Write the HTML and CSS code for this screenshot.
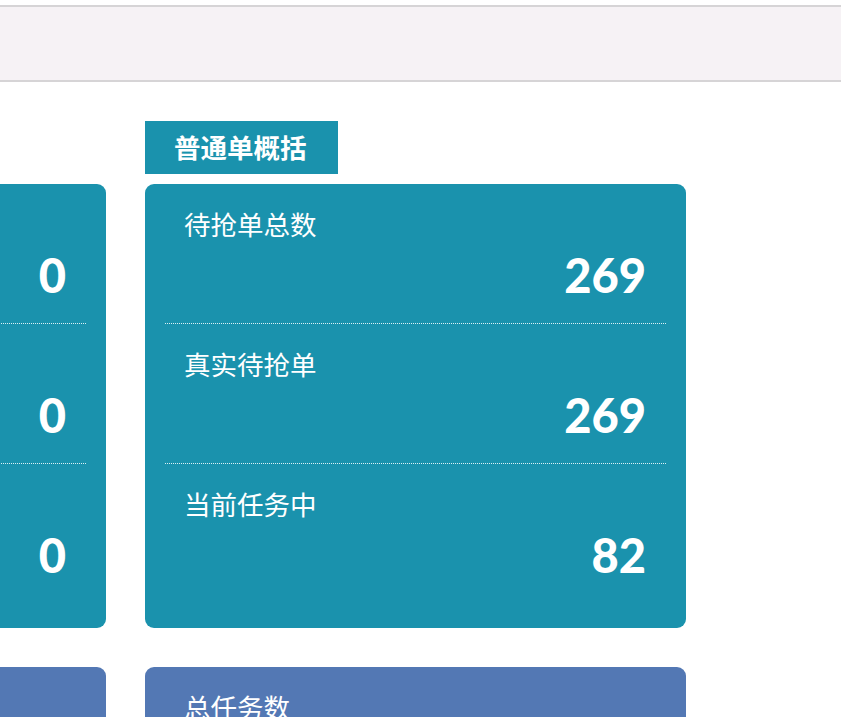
FILE: index.html
```html
<!DOCTYPE html>
<html lang="zh-CN">
<head>
<meta charset="utf-8">
<title>概括</title>
<link rel="stylesheet" href="styles.css">
</head>
<body>
<header class="topbar"></header>
<main class="board">
  <div class="row">
    <section class="col">
      <div class="tab">特殊单概括</div>
      <div class="card teal">
        <div class="item"><div class="label">待抢单总数</div><div class="num">0</div></div>
        <div class="item"><div class="label">真实待抢单</div><div class="num">0</div></div>
        <div class="item"><div class="label">当前任务中</div><div class="num">0</div></div>
      </div>
    </section>
    <section class="col">
      <div class="tab">普通单概括</div>
      <div class="card teal">
        <div class="item"><div class="label">待抢单总数</div><div class="num">269</div></div>
        <div class="item"><div class="label">真实待抢单</div><div class="num">269</div></div>
        <div class="item"><div class="label">当前任务中</div><div class="num">82</div></div>
      </div>
    </section>
  </div>
  <div class="row row2">
    <section class="col">
      <div class="card blue">
        <div class="item"><div class="label">总任务数</div><div class="num">0</div></div>
      </div>
    </section>
    <section class="col">
      <div class="card blue">
        <div class="item"><div class="label">总任务数</div><div class="num">0</div></div>
      </div>
    </section>
  </div>
</main>
</body>
</html>
```
FILE: styles.css
```css
html, body {
  margin: 0;
  padding: 0;
  background: #ffffff;
  overflow: hidden;
}
body {
  font-family: "Noto Sans CJK SC", "Noto Sans", sans-serif;
  color: #ffffff;
}
.topbar {
  margin-top: 5px;
  height: 73px;
  background: #f6f2f5;
  border-top: 2px solid #d6d4d6;
  border-bottom: 2px solid #d6d4d6;
}
.board {
  margin-left: -435px;
  padding-top: 39px;
}
.row {
  display: flex;
  gap: 39px;
  align-items: flex-start;
}
.row2 {
  margin-top: 39px;
}
.col {
  width: 541px;
  flex: none;
}
.tab {
  box-sizing: border-box;
  display: inline-block;
  background: #1a92ad;
  width: 193px;
  height: 53px;
  line-height: 52px;
  padding: 0 0 0 29px;
  font-size: 26.5px;
  font-weight: 700;
  margin-bottom: 10px;
  white-space: nowrap;
}
.card {
  border-radius: 9px;
  padding: 0 20px 24px;
}
.teal { background: #1a92ad; }
.blue { background: #5378b4; }
.item {
  box-sizing: border-box;
  height: 140px;
  padding: 25px 20px 0;
  border-bottom: 1px dotted rgba(255, 255, 255, 0.85);
}
.item:last-child {
  border-bottom: none;
}
.label {
  font-size: 26.5px;
  line-height: 30px;
  margin-left: -1px;
  white-space: nowrap;
}
.num {
  margin-top: 10px;
  text-align: right;
  font-family: "Lato", sans-serif;
  font-weight: 900;
  font-size: 47px;
  line-height: 52px;
}
```
